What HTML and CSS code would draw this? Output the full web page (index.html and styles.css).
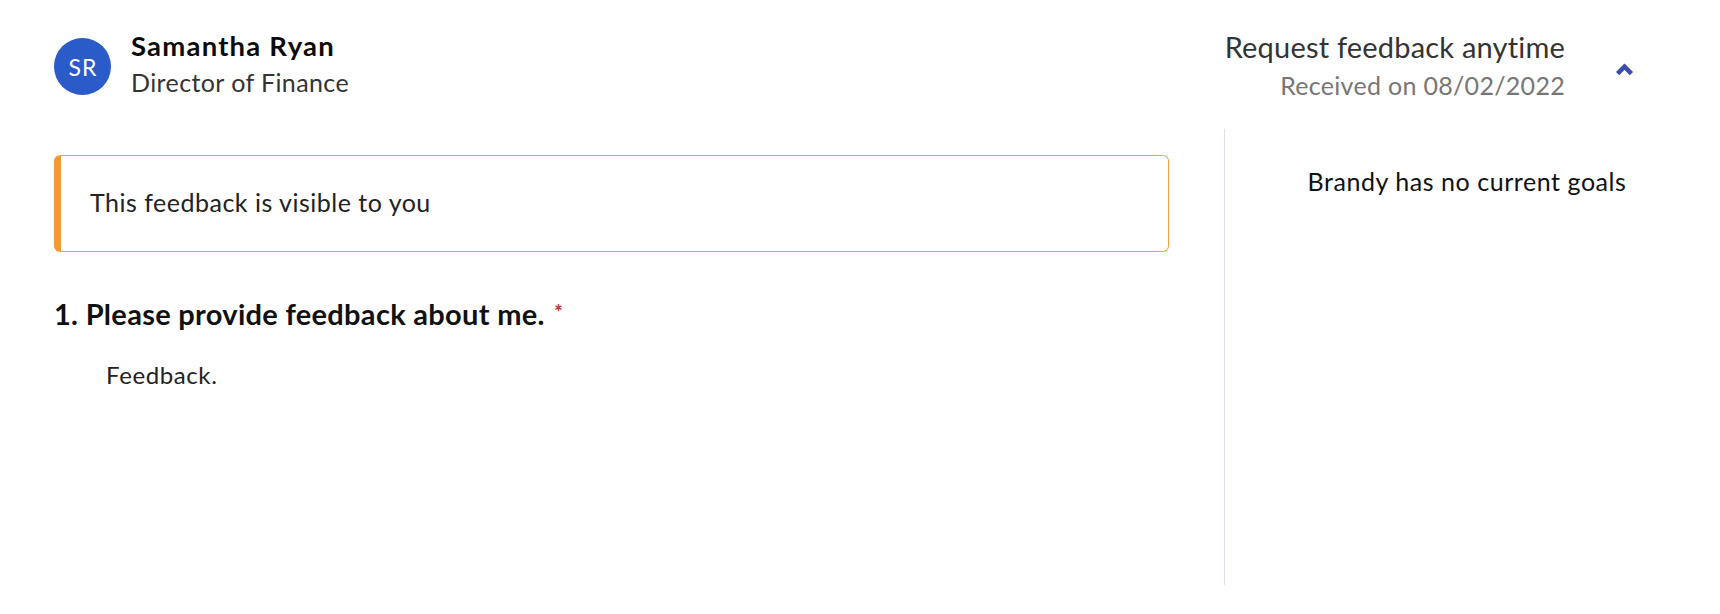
FILE: index.html
```html
<!DOCTYPE html>
<html lang="en">
<head>
<meta charset="utf-8">
<title>Feedback</title>
<link rel="stylesheet" href="styles.css">
</head>
<body>
<div class="page">
  <header class="header">
    <div class="person">
      <div class="avatar">SR</div>
      <div class="person-text">
        <div class="name">Samantha Ryan</div>
        <div class="role">Director of Finance</div>
      </div>
    </div>
    <div class="request">
      <div class="request-text">
        <div class="request-title">Request feedback anytime</div>
        <div class="request-date">Received on 08/02/2022</div>
      </div>
      <button class="toggle" type="button" aria-label="Collapse">
        <svg width="19" height="14" viewBox="0 0 19 14"><polyline points="2.6,11.6 9.5,4.7 16.4,11.6" fill="none" stroke="#3b4cae" stroke-width="4.6" stroke-linejoin="miter"/></svg>
      </button>
    </div>
  </header>
  <main class="main">
    <section class="content">
      <div class="notice">This feedback is visible to you</div>
      <div class="question">1. Please provide feedback about me. <span class="req">*</span></div>
      <div class="answer">Feedback.</div>
    </section>
    <aside class="goals">
      <p class="goals-empty">Brandy has no current goals</p>
    </aside>
  </main>
</div>
</body>
</html>
```
FILE: styles.css
```css
* { box-sizing: border-box; }
html, body { margin: 0; background: #fff; }
body {
  font-family: Lato, "Open Sans", Arial, sans-serif;
  color: #1c1c1c;
}
.page {
  padding: 0 11px 0 54px;
}
.header {
  display: flex;
  justify-content: space-between;
  align-items: flex-start;
  padding-top: 28px;
  padding-right: 75px;
  height: 129px;
}
.person {
  display: flex;
  align-items: flex-start;
  gap: 20px;
}
.avatar {
  width: 57px;
  height: 57px;
  margin-top: 10px;
  border-radius: 50%;
  background: #2b5bc9;
  color: #fff;
  font-size: 23px;
  letter-spacing: 1px;
  text-indent: 1px;
  display: flex;
  align-items: center;
  justify-content: center;
}
.name {
  font-size: 27.5px;
  font-weight: 700;
  line-height: 36px;
  letter-spacing: 1.2px;
  color: #0b0b0b;
}
.role {
  font-size: 25px;
  line-height: 36px;
  letter-spacing: 0.4px;
  color: #333;
}
.request {
  display: flex;
  align-items: flex-start;
  gap: 50px;
}
.request-text {
  text-align: right;
}
.request-title {
  font-size: 29px;
  line-height: 38px;
  letter-spacing: 0.2px;
  color: #333;
}
.request-date {
  font-size: 25px;
  line-height: 38px;
  letter-spacing: 0.3px;
  color: #767676;
}
.toggle {
  margin-top: 34px;
  padding: 0;
  border: 0;
  background: none;
  width: 19px;
  height: 14px;
  display: block;
}
.toggle svg { display: block; }
.main {
  display: flex;
  height: 456px;
}
.content {
  width: 1115px;
  padding-top: 26px;
}
.notice {
  border: 1px solid #f0a04b;
  border-left: 7px solid #f39a34;
  border-radius: 6px;
  padding: 29px 0 32px 29px;
  font-size: 25px;
  line-height: 34px;
  letter-spacing: 0.5px;
  color: #222;
}
.question {
  margin-top: 42px;
  font-size: 29px;
  font-weight: 700;
  line-height: 36px;
  letter-spacing: 0.3px;
  color: #111;
}
.req {
  color: #c8302a;
  font-size: 21px;
  font-weight: 700;
  vertical-align: 5px;
  margin-left: 2px;
}
.answer {
  margin-top: 28px;
  padding-left: 52px;
  font-size: 24px;
  line-height: 30px;
  letter-spacing: 0.6px;
  color: #222;
}
.goals {
  flex: 1;
  margin-left: 55px;
  border-left: 1px solid #dfe1ea;
  padding-top: 35px;
}
.goals-empty {
  margin: 0;
  text-align: center;
  font-size: 25px;
  line-height: 34px;
  letter-spacing: 0.55px;
  color: #111;
}
```
